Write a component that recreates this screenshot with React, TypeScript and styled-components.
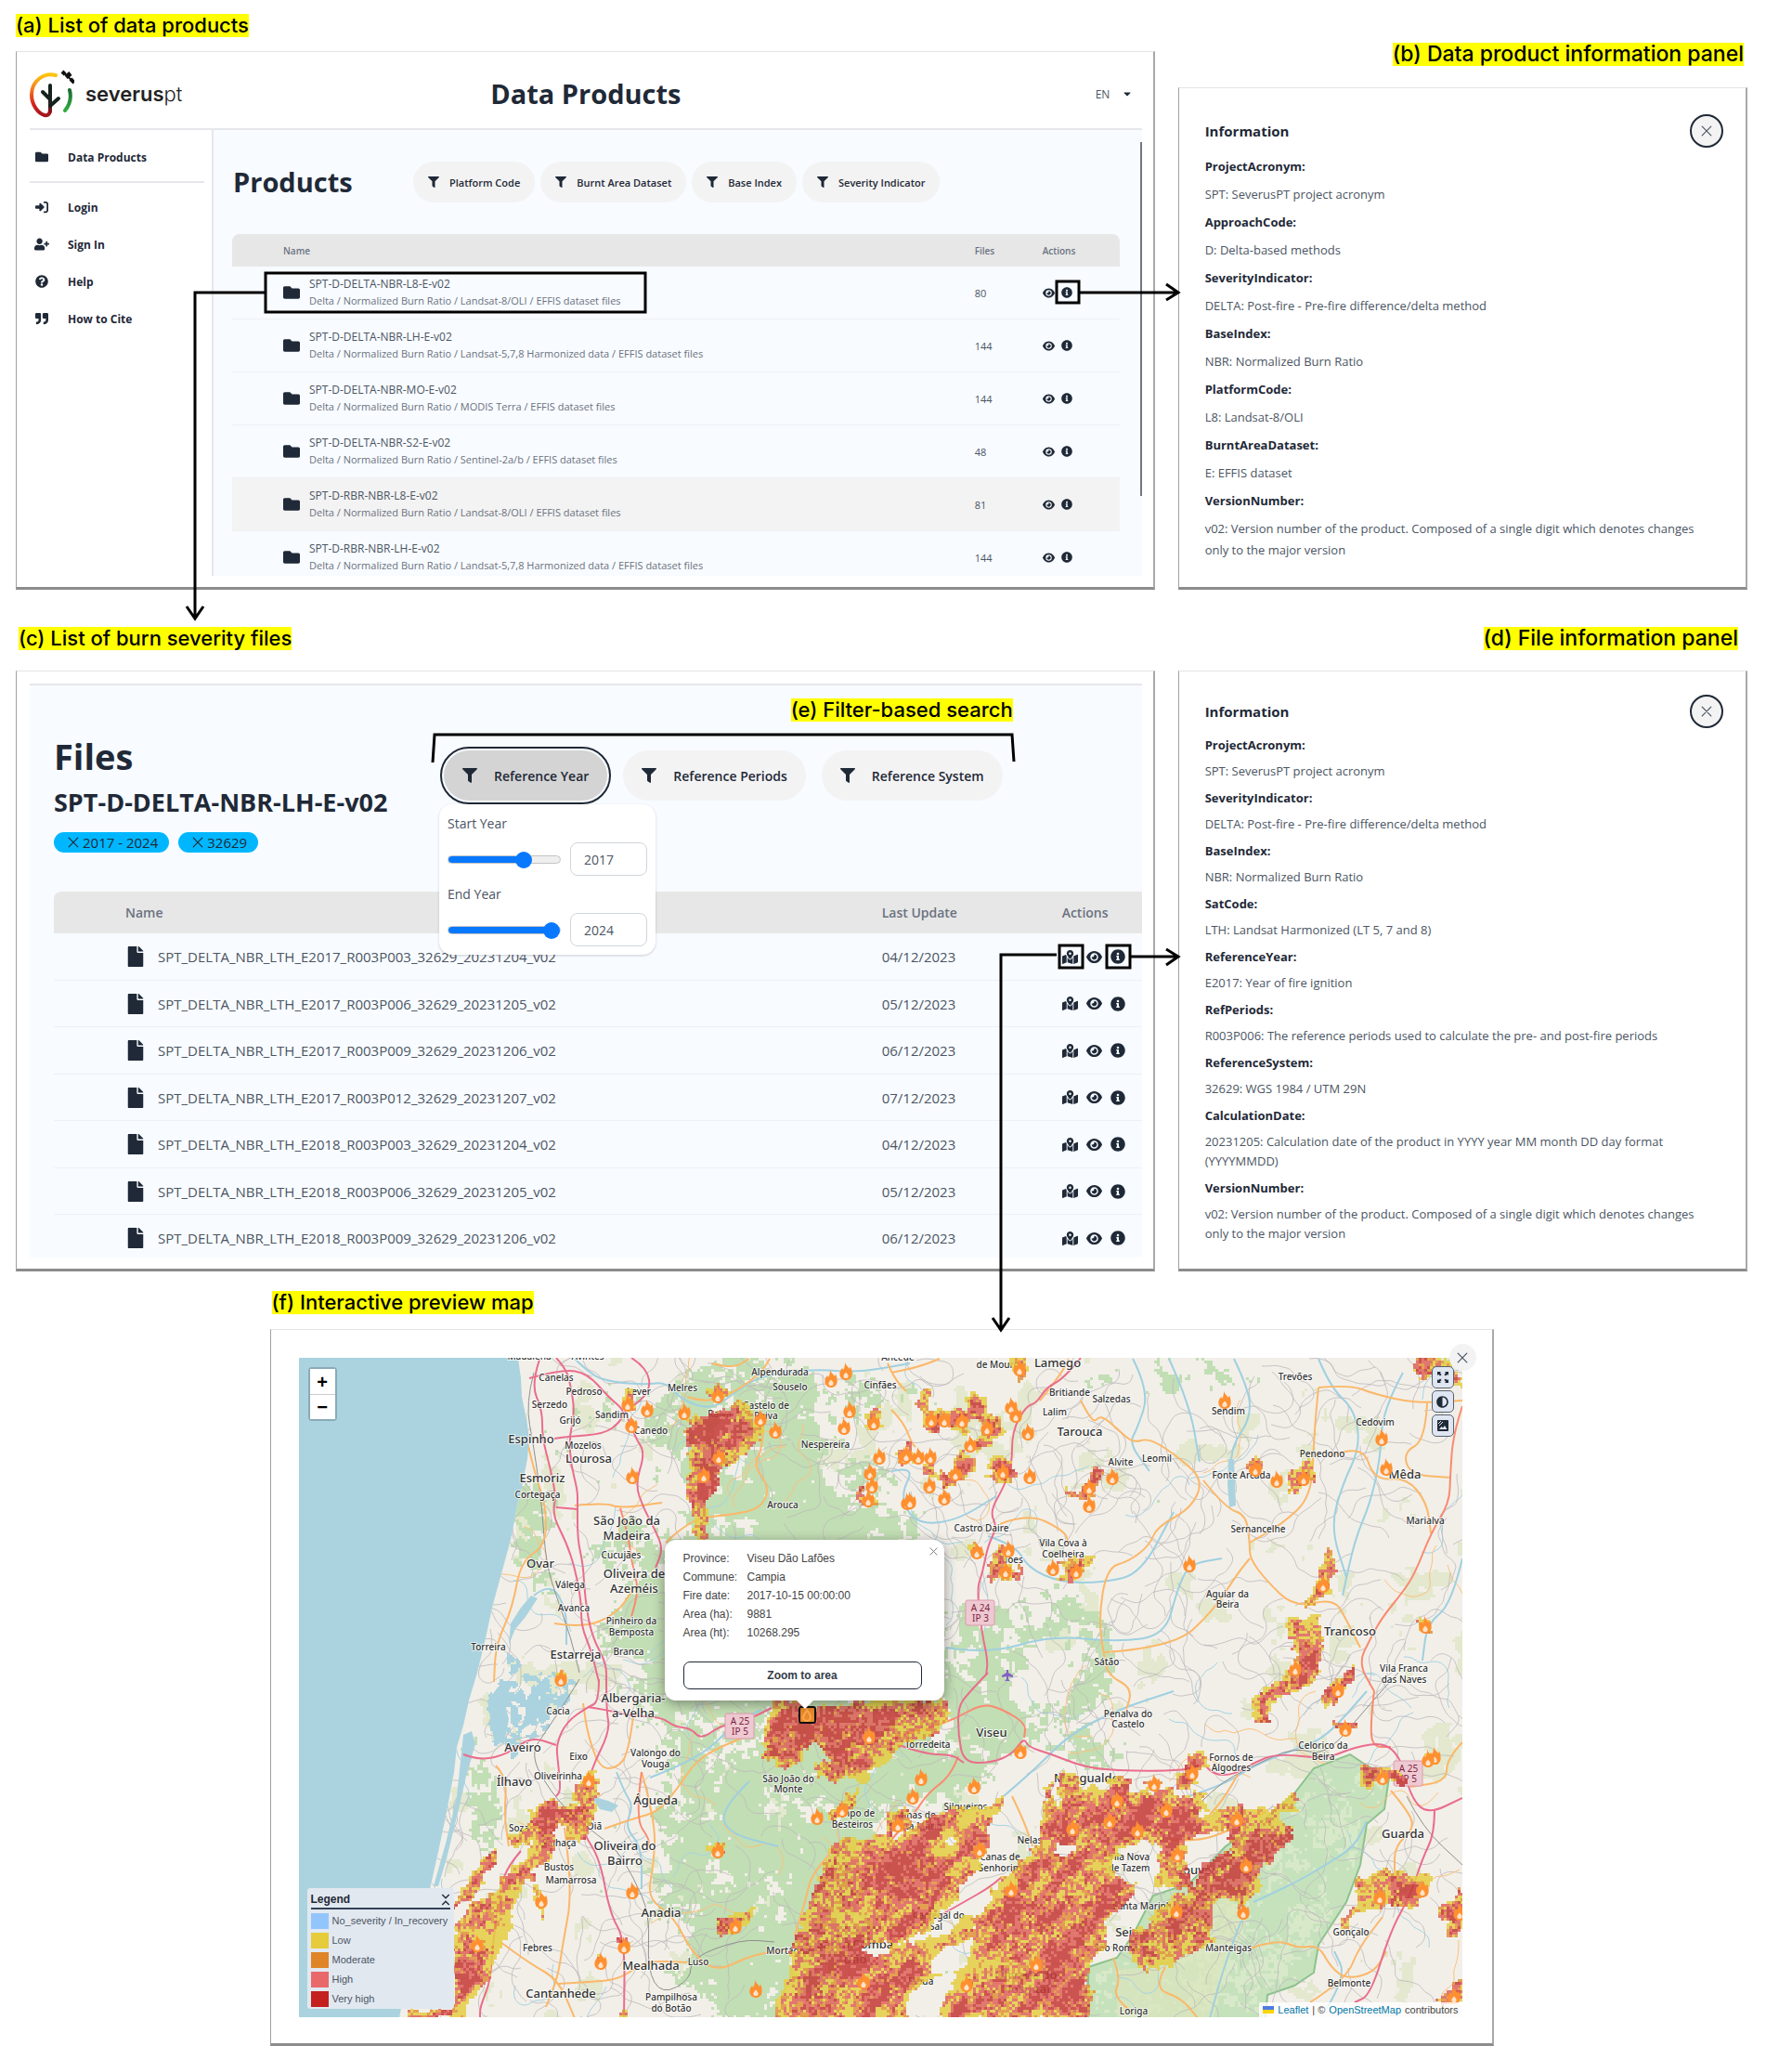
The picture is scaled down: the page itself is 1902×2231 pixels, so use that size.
import React, { useState } from "react";
import styled, { createGlobalStyle, css } from "styled-components";
import {
  FaFolder,
  FaFile,
  FaFilter,
  FaUserPlus,
  FaQuestionCircle,
  FaQuoteRight,
  FaInfoCircle,
  FaCaretDown,
  FaMapMarkedAlt,
  FaAdjust,
} from "react-icons/fa";
import { FaRightToBracket, FaEye } from "react-icons/fa6";

const ink = "#1f2937";
const slate = "#4b5563";
const line = "#e5e7eb";
const tint = "#f8fbff";

const Global = createGlobalStyle`
  *, *::before, *::after { box-sizing: border-box; }
  body { margin: 0; background: #fff; color: ${ink}; font-family: "Open Sans", "Noto Sans", sans-serif; }
  h1, h2, h3, p, ul, dl, dd, figure { margin: 0; padding: 0; }
  button, input, select { font: inherit; color: inherit; }
  button { cursor: pointer; }
`;

/* ---------- page frame ---------- */

const Page = styled.main`
  position: relative;
  padding: 15px 20px 28px 17px;
`;

const Pair = styled.div<{ $after: number }>`
  display: grid;
  grid-template-columns: 2fr 1fr;
  column-gap: 25px;
  margin-bottom: ${(p) => p.$after}px;
`;

const Column = styled.section<{ $drop?: boolean }>`
  position: relative;
  min-width: 0;
  display: flex;
  flex-direction: column;
  align-items: flex-start;
  padding-top: ${(p) => (p.$drop ? 31 : 0)}px;
`;

const Caption = styled.h2<{ $after: number; $indent?: number; $right?: number }>`
  background: #ff0;
  color: #000;
  font: 500 22px/25px Inter, "Open Sans", sans-serif;
  margin-bottom: ${(p) => p.$after}px;
  margin-left: ${(p) => p.$indent ?? 0}px;
  ${(p) =>
    p.$right !== undefined
      ? css`
          align-self: flex-end;
          margin-right: ${p.$right}px;
          font-size: 23px;
        `
      : ""}
`;

const FloatingCaption = styled(Caption)`
  position: absolute;
  top: 77px;
  right: 153px;
  z-index: 2;
`;

const Panel = styled.div`
  width: 100%;
  flex: 1;
  background: #fff;
  border-style: solid;
  border-width: 1px 2px 3px 1px;
  border-color: #e4e4e4 #a9a9a9 #8c8c8c #a0a0a0;
`;

/* ---------- product list ---------- */

const AppShell = styled(Panel)`
  padding: 0 12px 12px 14px;
`;

const Header = styled.header`
  display: grid;
  grid-template-columns: 1fr auto 1fr;
  align-items: center;
  height: 84px;
  padding-top: 8px;
  border-bottom: 2px solid ${line};
`;

const Brand = styled.a`
  display: flex;
  align-items: center;
  gap: 12px;
  color: #222;
  text-decoration: none;
  font: 600 22px/24px Inter, sans-serif;
  span {
    font-weight: 300;
  }
`;

const PageTitle = styled.h1`
  font-size: 29px;
  line-height: 40px;
  font-weight: 700;
`;

const Language = styled.label`
  justify-self: end;
  display: flex;
  align-items: center;
  gap: 12px;
  padding-right: 10px;
  font-size: 12px;
  select {
    appearance: none;
    border: 0;
    padding: 0;
    background: none;
    color: ${slate};
  }
`;

const ShellBody = styled.div`
  display: flex;
  height: 480px;
  overflow: hidden;
`;

const Sidebar = styled.nav`
  flex: 0 0 198px;
  padding: 9px 8px 0 0;
  border-right: 2px solid ${line};
`;

const NavList = styled.ul`
  list-style: none;
  & + & {
    margin-top: 6px;
    padding-top: 6px;
    border-top: 2px solid ${line};
  }
`;

const NavLink = styled.a`
  display: grid;
  grid-template-columns: 36px 1fr;
  align-items: center;
  height: 40px;
  padding-left: 5px;
  color: ${ink};
  font-size: 12px;
  font-weight: 700;
  text-decoration: none;
  svg {
    width: 16px;
    height: 14px;
    justify-self: start;
  }
`;

const ProductArea = styled.div`
  position: relative;
  flex: 1;
  min-width: 0;
  padding: 34px 24px 0 20px;
  background: ${tint};
`;

const ScrollThumb = styled.span`
  position: absolute;
  top: 13px;
  right: 0;
  width: 2px;
  height: 381px;
  background: #71777d;
`;

const Toolbar = styled.div`
  display: flex;
  align-items: center;
  margin-bottom: 34px;
`;

const ProductHeading = styled.h2`
  flex: 0 0 195px;
  padding-left: 1px;
  font-size: 29px;
  line-height: 44px;
`;

const FilterRow = styled.div<{ $gap: number }>`
  display: flex;
  gap: ${(p) => p.$gap}px;
`;

const FilterButton = styled.button<{ $large?: boolean; $open?: boolean }>`
  display: flex;
  align-items: center;
  white-space: nowrap;
  border: 0;
  border-radius: 28px;
  font-weight: 600;
  height: ${(p) => (p.$large ? 54 : 44)}px;
  gap: ${(p) => (p.$large ? 18 : 11)}px;
  padding: 0 ${(p) => (p.$large ? 20 : 16)}px;
  font-size: ${(p) => (p.$large ? 14 : 11)}px;
  background: ${(p) => (p.$open ? "#d4d4d4" : "#f3f3f3")};
  outline: ${(p) => (p.$open ? `2px solid ${ink}` : "none")};
  outline-offset: 2px;
  svg {
    width: ${(p) => (p.$large ? 16 : 12)}px;
    height: ${(p) => (p.$large ? 16 : 12)}px;
  }
`;

const Table = styled.table<{ $large?: boolean }>`
  width: 100%;
  table-layout: fixed;
  border-collapse: separate;
  border-spacing: 0;
  font-size: ${(p) => (p.$large ? 15 : 12)}px;
  color: ${slate};
  th {
    height: ${(p) => (p.$large ? 45 : 35)}px;
    padding: 0;
    text-align: left;
    font-size: ${(p) => (p.$large ? 14 : 10)}px;
    font-weight: 600;
    color: #6b7280;
    background: #e7e7e7;
  }
  th:first-child {
    border-top-left-radius: 8px;
  }
  th:last-child {
    border-top-right-radius: ${(p) => (p.$large ? 0 : 8)}px;
  }
  td {
    padding: 0;
    height: ${(p) => (p.$large ? 51 : 57)}px;
    border-bottom: 1px solid #eef1f4;
  }
  tr:nth-child(even) td {
    height: ${(p) => (p.$large ? 50 : 57)}px;
  }
  td:first-child,
  th:first-child {
    padding-left: ${(p) => (p.$large ? 77 : 55)}px;
  }
`;

const Col = styled.col<{ $w?: number }>`
  width: ${(p) => (p.$w ? p.$w + "px" : "auto")};
`;

const Row = styled.tr<{ $hover?: boolean }>`
  background: ${(p) => (p.$hover ? "#f3f3f3" : "transparent")};
`;

const NameCell = styled.div<{ $gap: number }>`
  display: flex;
  align-items: center;
  gap: ${(p) => p.$gap}px;
  white-space: nowrap;
  line-height: 18px;
  svg {
    color: ${ink};
    flex: none;
  }
  small {
    display: block;
    font-size: 11px;
    color: #6b7280;
  }
`;

const Count = styled.td`
  font-size: 11px;
`;

const Actions = styled.div<{ $gap: number }>`
  display: flex;
  align-items: center;
  gap: ${(p) => p.$gap}px;
`;

const IconButton = styled.button`
  display: flex;
  padding: 0;
  border: 0;
  background: none;
  color: ${ink};
`;

/* ---------- information panels ---------- */

const InfoPanel = styled(Panel)<{ $top: number }>`
  padding: ${(p) => p.$top}px 24px 12px 28px;
`;

const InfoHead = styled.div<{ $after: number }>`
  display: flex;
  justify-content: space-between;
  align-items: center;
  margin-bottom: ${(p) => p.$after}px;
  h3 {
    font-size: 15px;
    line-height: 24px;
    font-weight: 700;
  }
`;

const RoundClose = styled.button`
  display: grid;
  place-items: center;
  width: 36px;
  height: 36px;
  padding: 0;
  border: 2px solid ${ink};
  border-radius: 50%;
  background: #f3f3f3;
  color: ${slate};
`;

const Facts = styled.dl<{ $line: number; $gap: number }>`
  padding-right: 12px;
  font-size: 13px;
  line-height: ${(p) => p.$line}px;
  dt {
    font-weight: 700;
    margin-bottom: 7px;
  }
  dd {
    color: ${slate};
    margin-bottom: ${(p) => p.$gap}px;
  }
`;

/* ---------- file list ---------- */

const FilePanel = styled(Panel)`
  padding: 13px 12px 12px 14px;
`;

const FileArea = styled.div`
  height: 618px;
  overflow: hidden;
  border-top: 2px solid ${line};
  background: ${tint};
  padding: 52px 0 0 26px;
`;

const FileToolbar = styled.div`
  display: flex;
  align-items: flex-start;
  margin-bottom: 42px;
`;

const FileTitles = styled.div`
  flex: 0 0 420px;
  h2 {
    font-size: 38px;
    line-height: 48px;
  }
  h3 {
    margin: 9px 0 15px;
    font-size: 27px;
    line-height: 34px;
    font-weight: 700;
  }
`;

const Chips = styled.div`
  display: flex;
  gap: 10px;
`;

const Chip = styled.button`
  display: flex;
  align-items: center;
  gap: 4px;
  height: 22px;
  padding: 0 12px 0 15px;
  border: 0;
  border-radius: 11px;
  background: #00b7ff;
  font-size: 15px;
`;

const FileFilters = styled(FilterRow)`
  padding-top: 18px;
`;

const Anchor = styled.div`
  position: relative;
`;

const YearMenu = styled.div`
  position: absolute;
  top: 58px;
  left: -5px;
  z-index: 1;
  width: 233px;
  padding: 11px 9px 9px;
  border-radius: 14px;
  background: #fff;
  box-shadow: 0 1px 3px rgba(0, 0, 0, 0.18);
  font-size: 14px;
  color: ${slate};
`;

const YearField = styled.div`
  & + & {
    margin-top: 10px;
  }
  label {
    display: block;
    line-height: 20px;
    margin-bottom: 10px;
  }
  div {
    display: flex;
    align-items: center;
    gap: 10px;
  }
`;

const Slider = styled.input<{ $fill: number }>`
  appearance: none;
  width: 122px;
  height: 18px;
  margin: 0;
  background: none;
  &::-webkit-slider-runnable-track {
    height: 9px;
    border: 1px solid #c4c4c4;
    border-radius: 5px;
    background: linear-gradient(to right, #0878ff ${(p) => p.$fill}%, #efefef ${(p) => p.$fill}%);
    background-origin: border-box;
  }
  &::-webkit-slider-thumb {
    appearance: none;
    width: 18px;
    height: 18px;
    margin-top: -5px;
    border-radius: 50%;
    background: #0878ff;
  }
`;

const YearBox = styled.input`
  width: 83px;
  height: 36px;
  padding: 0 14px;
  border: 1px solid #d1d5db;
  border-radius: 8px;
  background: #fff;
  font-size: 14px;
`;

/* ---------- map preview ---------- */

const MapSection = styled.section`
  width: 71%;
  max-width: 1318px;
  margin: 0 auto;
  display: flex;
  flex-direction: column;
  align-items: flex-start;
`;

const MapPanel = styled(Panel)`
  padding: 30px 32px 28px 30px;
`;

const MapFrame = styled.div`
  position: relative;
  font: 12px/19px "Liberation Sans", Arial, sans-serif;
  color: #444;
  > svg {
    display: block;
    width: 100%;
    height: auto;
  }
`;

const ZoomControl = styled.div`
  position: absolute;
  top: 10px;
  left: 10px;
  width: 31px;
  border: 2px solid rgba(90, 110, 120, 0.4);
  border-radius: 4px;
  button {
    display: block;
    width: 27px;
    height: 27px;
    padding: 0;
    border: 0;
    background: #fff;
    color: #000;
    font-weight: 700;
    font-size: 20px;
    line-height: 26px;
  }
  button + button {
    border-top: 1px solid #ccc;
  }
`;

const MapTools = styled.div`
  position: absolute;
  top: 9px;
  right: 9px;
  display: grid;
  gap: 2px;
  button {
    display: grid;
    place-items: center;
    width: 24px;
    height: 24px;
    padding: 0;
    border: 1px solid #59616d;
    border-radius: 5px;
    background: #dfe6f1;
    color: ${ink};
  }
`;

const MapClose = styled.button`
  position: absolute;
  top: -15px;
  right: -15px;
  display: grid;
  place-items: center;
  width: 29px;
  height: 29px;
  padding: 0;
  border: 0;
  border-radius: 50%;
  background: #f3f3f3;
  color: ${slate};
`;

const Popup = styled.div`
  position: absolute;
  top: 196px;
  left: 394px;
  width: 301px;
  height: 173px;
  padding: 10px 24px 0 20px;
  border-radius: 12px;
  background: #fff;
  box-shadow: 0 3px 14px rgba(0, 0, 0, 0.4);
  &::after {
    content: "";
    position: absolute;
    left: 142px;
    bottom: -9px;
    border: 9px solid transparent;
    border-bottom: 0;
    border-top-color: #fff;
  }
  dl {
    display: grid;
    grid-template-columns: 69px 1fr;
    line-height: 20px;
    font-size: 12px;
    height: 121px;
    align-content: start;
  }
`;

const PopupClose = styled.button`
  position: absolute;
  top: 6px;
  right: 5px;
  display: flex;
  padding: 2px;
  border: 0;
  background: none;
  color: #757575;
`;

const AreaButton = styled.button`
  width: 100%;
  height: 30px;
  border: 1px solid ${ink};
  border-radius: 7px;
  background: #fff;
  color: #333c48;
  font-weight: 700;
`;

const Legend = styled.div`
  position: absolute;
  left: 9px;
  bottom: 9px;
  width: 158px;
  height: 130px;
  padding: 3px 4px;
  border-radius: 3px;
  background: #e2e8f0;
  color: ${slate};
  white-space: nowrap;
  ul {
    display: grid;
    row-gap: 1px;
    padding-top: 2px;
    list-style: none;
  }
  li {
    display: flex;
    align-items: center;
    gap: 4px;
    height: 20px;
    font-size: 11px;
  }
`;

const LegendHead = styled.button`
  display: flex;
  justify-content: space-between;
  align-items: center;
  width: 100%;
  height: 20px;
  padding: 0;
  border: 0;
  border-bottom: 2px solid #334155;
  background: none;
  font-weight: 700;
  color: ${ink};
`;

const Swatch = styled.i<{ $c: string }>`
  width: 19px;
  height: 17px;
  background: ${(p) => p.$c};
`;

const Attribution = styled.div`
  position: absolute;
  right: 0;
  bottom: 0;
  display: flex;
  align-items: center;
  gap: 4px;
  padding: 0 4px;
  line-height: 16px;
  font-size: 11px;
  background: rgba(255, 255, 255, 0.8);
  a {
    color: #0078a8;
    text-decoration: none;
  }
`;

const Callouts = styled.svg`
  position: absolute;
  inset: 0;
  width: 100%;
  height: 100%;
  pointer-events: none;
  z-index: 3;
`;

/* ---------- map geometry ---------- */

const W = 1253;
const H = 710;

type Pt = [number, number];
type Sheet = (flat: number[]) => Pt[];

/* Map features are digitised on four overlapping sheets, each with its own origin. */
const sheet =
  (ox: number, oy: number, sx: number): Sheet =>
  (flat) => {
    const out: Pt[] = [];
    for (let i = 0; i < flat.length; i += 2) {
      out.push([Math.round(flat[i] / sx + ox), Math.round(flat[i + 1] / 3 + oy)]);
    }
    return out;
  };

const NW = sheet(-42, -91, 2.24);
const NE = sheet(638, -51, 2.306);
const SW = sheet(-42, 339, 2.24);
const SE = sheet(638, 339, 2.306);

const hash = (x: number, y: number) => {
  let h = (x * 374761393 + y * 668265263) | 0;
  h = Math.imul(h ^ (h >>> 13), 1274126177);
  return ((h ^ (h >>> 16)) >>> 0) / 4294967296;
};

const noise = (x: number, y: number) => {
  const xi = Math.floor(x);
  const yi = Math.floor(y);
  const fx = x - xi;
  const fy = y - yi;
  const u = fx * fx * (3 - 2 * fx);
  const v = fy * fy * (3 - 2 * fy);
  const a = hash(xi, yi) * (1 - u) + hash(xi + 1, yi) * u;
  const b = hash(xi, yi + 1) * (1 - u) + hash(xi + 1, yi + 1) * u;
  return a * (1 - v) + b * v;
};

const inside = (poly: Pt[], x: number, y: number) => {
  let hit = false;
  for (let i = 0, j = poly.length - 1; i < poly.length; j = i++) {
    const [xi, yi] = poly[i];
    const [xj, yj] = poly[j];
    if (yi > y !== yj > y && x < ((xj - xi) * (y - yi)) / (yj - yi) + xi) hit = !hit;
  }
  return hit;
};

const edgeDistance = (poly: Pt[], x: number, y: number) => {
  let best = 1e9;
  for (let i = 0, j = poly.length - 1; i < poly.length; j = i++) {
    const [ax, ay] = poly[j];
    const [bx, by] = poly[i];
    const dx = bx - ax;
    const dy = by - ay;
    const t = Math.max(0, Math.min(1, ((x - ax) * dx + (y - ay) * dy) / (dx * dx + dy * dy || 1)));
    best = Math.min(best, Math.hypot(x - ax - t * dx, y - ay - t * dy));
  }
  return best;
};

const trace = (pts: Pt[], close = false) =>
  "M" + pts.map((p) => p.join(" ")).join("L") + (close ? "Z" : "");

const curve = (pts: Pt[]) => {
  let d = `M${pts[0][0]} ${pts[0][1]}`;
  for (let i = 1; i < pts.length - 1; i++) {
    const mx = (pts[i][0] + pts[i + 1][0]) / 2;
    const my = (pts[i][1] + pts[i + 1][1]) / 2;
    d += `Q${pts[i][0]} ${pts[i][1]} ${mx} ${my}`;
  }
  const last = pts[pts.length - 1];
  return d + `L${last[0]} ${last[1]}`;
};

const coast: Pt[] = [
  ...NW([622, 273, 630, 340, 632, 400, 642, 470, 650, 530, 645, 600, 632, 690, 620, 750, 605, 860, 580, 980, 560, 1080, 545, 1180, 525, 1290]),
  ...SW([505, 90, 490, 170, 475, 240, 468, 320, 450, 450, 430, 580, 410, 700, 380, 860, 350, 1020, 335, 1115]),
];
const sea: Pt[] = [[0, 0], ...coast, [0, H]];

const marshes: Pt[][] = [
  SW([545, 80, 570, 30, 600, -20, 660, 10, 700, 0, 740, 20, 745, 90, 700, 130, 700, 170, 650, 220, 610, 280, 575, 260, 550, 200]),
  NW([595, 1225, 625, 1250, 640, 1300, 690, 1280, 740, 1290, 770, 1330, 585, 1330]),
];

const lagoons: Pt[][] = [
  SW([548, 90, 575, 45, 612, 30, 590, 90, 600, 150, 590, 230, 565, 220]),
  SW([640, 100, 690, 80, 690, 120, 660, 160, 625, 190, 640, 140]),
  NW([605, 1130, 630, 1080, 655, 1040, 670, 1050, 640, 1110, 615, 1150, 600, 1200]),
  SW([490, 200, 510, 190, 520, 230, 500, 320, 480, 440, 450, 600, 430, 690, 420, 690, 450, 540, 475, 400]),
  SW([800, 400, 840, 415, 865, 430, 850, 450, 820, 440]),
  NE([838, 480, 850, 480, 855, 630, 840, 635, 835, 560]),
];

const buildMarsh = () => {
  let d = "";
  for (const poly of marshes) {
    for (let y = 300; y < 450; y += 2) {
      for (let x = 190; x < 310; x += 2) {
        if (inside(poly, x, y) && noise(x / 7, y / 7) * 0.7 + noise(x / 3, y / 3) * 0.3 > 0.48) d += `M${x} ${y}h2v2h-2z`;
      }
    }
  }
  return d;
};

/* Forest cover: centre, radii and density of each wooded block. */
const woods: number[][] = [
  [505, 180, 100, 140, 0.9], [450, 60, 80, 70, 0.8], [560, 60, 90, 60, 0.35], [420, 330, 60, 110, 0.85],
  [470, 440, 90, 150, 1], [560, 520, 90, 200, 1], [470, 620, 80, 120, 0.9], [600, 260, 80, 90, 0.6],
  [745, 400, 90, 60, 0.9], [720, 330, 60, 70, 0.9], [860, 330, 40, 70, 0.8], [800, 270, 60, 40, 0.75],
  [330, 70, 80, 60, 0.45], [320, 230, 60, 100, 0.4], [250, 200, 26, 70, 0.75], [195, 480, 30, 90, 0.8],
  [340, 560, 80, 60, 0.35], [640, 160, 90, 80, 0.35], [880, 20, 90, 30, 0.6], [1020, 20, 80, 30, 0.5],
  [920, 180, 60, 60, 0.3], [640, 400, 60, 60, 0.7], [380, 250, 50, 90, 0.6], [660, 30, 80, 40, 0.3],
  [870, 440, 60, 40, 0.5], [230, 150, 30, 60, 0.5], [680, 450, 60, 50, 0.55], [720, 660, 50, 40, 0.4],
];

const buildWoods = () => {
  let dark = "";
  let pale = "";
  for (let y = 0; y < H; y += 3) {
    for (let x = 0; x < W; x += 3) {
      let d = 0;
      for (const [cx, cy, rx, ry, k] of woods) {
        const q = ((x - cx) / rx) ** 2 + ((y - cy) / ry) ** 2;
        if (q < 2.6) d += k * Math.exp(-q * 1.1);
      }
      const n = noise(x / 30, y / 30) * 0.35 + noise(x / 11 + 40, y / 11) * 0.35 + noise(x / 4, y / 4 + 70) * 0.3;
      if (n < Math.min(d, 0.92) * 0.72) dark += `M${x} ${y}h3v3h-3z`;
      else if (noise(x / 34 + 90, y / 34) * 0.75 + noise(x / 8, y / 8) * 0.25 > 0.74) pale += `M${x} ${y}h3v3h-3z`;
    }
  }
  return { dark, pale };
};

const estrela = SE([1140, 265, 1180, 300, 1235, 340, 1225, 440, 1180, 490, 1165, 620, 1130, 740, 1060, 880, 1050, 970, 1000, 1010, 935, 1040, 930, 1115, 490, 1115, 490, 950, 560, 920, 600, 850, 650, 720, 740, 680, 830, 560, 930, 470, 1000, 390, 1050, 310]);
const meadow = SE([560, 960, 640, 950, 760, 880, 800, 740, 840, 720, 880, 800, 830, 960, 800, 1115, 560, 1115]);

const buildClearings = () => {
  let d = "";
  for (let y = 420; y < H; y += 3) {
    for (let x = 840; x < 1180; x += 3) {
      if (!inside(estrela, x, y) || edgeDistance(estrela, x, y) < 8) continue;
      if (noise(x / 22, y / 30) * 0.5 + noise(x / 4, y / 4) * 0.5 > 0.6) d += `M${x} ${y}h3v3h-3z`;
    }
  }
  return d;
};

const burns: Pt[][] = [
  NW([1040, 450, 1100, 455, 1130, 430, 1160, 405, 1180, 440, 1190, 470, 1215, 480, 1205, 540, 1160, 590, 1120, 620, 1100, 690, 1070, 740, 1080, 800, 1078, 870, 1050, 870, 1042, 800, 1035, 740, 1032, 660, 1035, 560, 1025, 510]),
  NW([1072, 375, 1095, 358, 1132, 380, 1120, 412, 1080, 402]),
  NW([1458, 450, 1495, 430, 1498, 500, 1465, 510]),
  NW([1434, 690, 1455, 688, 1465, 720, 1494, 728, 1492, 754, 1450, 742]),
  NW([1540, 575, 1568, 560, 1578, 600, 1540, 608]),
  NW([878, 375, 902, 375, 905, 440, 880, 440]),
  NW([708, 1290, 740, 1290, 735, 1312, 712, 1310]),
  NE([292, 155, 338, 155, 335, 190, 318, 225, 300, 200]),
  NE([60, 300, 80, 250, 100, 262, 95, 315, 140, 325, 180, 315, 195, 262, 235, 278, 240, 340, 278, 345, 280, 390, 240, 435, 210, 460, 196, 430, 220, 400, 225, 352, 200, 350, 180, 395, 150, 388, 125, 372, 110, 392, 90, 382, 80, 340]),
  NE([15, 440, 45, 430, 50, 485, 20, 490]),
  NE([160, 460, 185, 440, 207, 510, 180, 545, 150, 565, 135, 582, 118, 545, 88, 530, 78, 490, 100, 495, 115, 528, 150, 515]),
  NE([232, 510, 270, 465, 292, 480, 312, 520, 290, 560, 250, 548]),
  NE([500, 508, 538, 520, 515, 560, 505, 604, 470, 612, 425, 592, 423, 563, 460, 583, 485, 558]),
  NE([878, 500, 900, 465, 915, 490, 912, 530, 890, 520]),
  NE([985, 515, 1045, 476, 1054, 530, 1020, 574, 988, 594]),
  NE([1300, 150, 1385, 150, 1400, 200, 1420, 205, 1420, 255, 1398, 245, 1380, 212, 1340, 205, 1308, 235]),
  NE([190, 755, 215, 755, 225, 800, 200, 785]),
  NE([250, 790, 270, 760, 300, 765, 288, 800, 300, 838, 327, 825, 322, 862, 290, 877, 260, 862, 243, 882]),
  NE([403, 800, 440, 810, 497, 795, 492, 828, 465, 852, 455, 882, 413, 880, 428, 842]),
  NE([1083, 765, 1102, 800, 1093, 870, 1087, 915, 1050, 952, 1028, 957, 1043, 900, 1062, 840]),
  NE([985, 990, 1020, 992, 1064, 970, 1062, 1050, 1077, 1090, 1052, 1190, 1030, 1214, 1000, 1230, 960, 1252, 942, 1280, 932, 1335, 898, 1340, 893, 1300, 903, 1240, 950, 1200, 998, 1150, 1003, 1100, 985, 1060]),
  NE([1103, 1190, 1150, 1150, 1137, 1200, 1112, 1242, 1102, 1278, 1068, 1282, 1066, 1240, 1083, 1210]),
  NE([1308, 995, 1335, 990, 1342, 1037, 1310, 1032]),
  SE([1095, 160, 1155, 155, 1150, 170, 1130, 190, 1100, 180]),
  SE([710, 330, 740, 300, 734, 256, 780, 255, 780, 295, 760, 330, 735, 377, 708, 372]),
  SE([1163, 298, 1200, 298, 1237, 305, 1282, 330, 1277, 367, 1250, 352, 1220, 322, 1205, 352, 1168, 372]),
  SE([1318, 253, 1362, 258, 1352, 292, 1323, 302]),
  SE([1158, 668, 1190, 653, 1225, 633, 1252, 630, 1290, 658, 1342, 638, 1342, 682, 1322, 692, 1302, 767, 1250, 742, 1190, 768, 1140, 788, 1132, 818, 1116, 802, 1128, 770, 1150, 755, 1150, 700]),
  SE([1350, 755, 1385, 740, 1410, 698, 1424, 720, 1424, 800, 1402, 865, 1383, 842, 1383, 810]),
  SE([1355, 1055, 1400, 1000, 1424, 983, 1424, 1060, 1380, 1068]),
  SE([615, 350, 670, 345, 660, 370, 640, 368]),
  SW([1240, 88, 1300, 88, 1330, 118, 1380, 112, 1430, 88, 1655, 88, 1665, 130, 1625, 205, 1560, 222, 1503, 292, 1472, 327, 1457, 370, 1430, 334, 1385, 360, 1337, 322, 1337, 290, 1378, 280, 1353, 250, 1348, 222, 1312, 242, 1303, 282, 1265, 310, 1217, 272, 1211, 200, 1226, 150]),
  SW([1403, 370, 1442, 383, 1428, 432, 1410, 463, 1375, 478, 1373, 455, 1400, 430, 1420, 395]),
  SW([1518, 455, 1560, 430, 1568, 500, 1540, 512, 1503, 542]),
  SE([-62, 535, -20, 525, 20, 530, 80, 470, 110, 465, 150, 430, 235, 435, 270, 400, 280, 425, 242, 470, 242, 540, 227, 590, 215, 640, 180, 680, 160, 740, 120, 780, 90, 830, 40, 860, 10, 880, 100, 855, 150, 830, 170, 790, 217, 778, 207, 842, 150, 882, 110, 905, 90, 960, 122, 980, 80, 990, 45, 1030, 40, 1120, -300, 1120, -278, 1040, -257, 970, -239, 870, -218, 780, -187, 680, -167, 620, -152, 555, -100, 530]),
  SE([378, 370, 405, 352, 402, 410, 420, 420, 413, 328, 460, 318, 470, 380, 510, 370, 560, 333, 602, 338, 590, 385, 640, 380, 700, 368, 707, 400, 740, 400, 745, 378, 777, 388, 782, 440, 750, 460, 800, 460, 860, 418, 880, 440, 932, 423, 925, 450, 1002, 383, 1002, 442, 960, 460, 970, 500, 1002, 498, 997, 542, 962, 572, 947, 614, 917, 624, 917, 692, 892, 715, 870, 766, 830, 722, 802, 742, 794, 800, 794, 872, 742, 904, 692, 944, 632, 960, 595, 932, 598, 828, 638, 818, 638, 778, 690, 748, 698, 710, 740, 710, 730, 692, 648, 692, 663, 620, 660, 542, 620, 547, 560, 577, 552, 650, 602, 678, 604, 712, 562, 762, 532, 792, 532, 882, 497, 932, 492, 960, 477, 1000, 512, 1030, 492, 1062, 487, 1120, 126, 1120, 132, 1060, 162, 970, 187, 940, 207, 800, 267, 680, 328, 600, 363, 560, 373, 480]),
  SW([753, 370, 790, 318, 817, 338, 814, 380, 802, 420, 802, 480, 772, 542, 738, 537, 743, 500, 715, 482, 707, 560, 702, 602, 662, 632, 627, 690, 603, 790, 603, 830, 573, 902, 558, 952, 542, 1012, 503, 1062, 492, 1120, 346, 1120, 352, 1090, 466, 1088, 466, 810, 518, 740, 577, 700, 577, 660, 648, 590, 657, 540, 618, 572, 598, 530, 638, 500, 657, 440, 710, 398, 722, 430, 765, 420]),
  SW([558, 563, 577, 605, 547, 652, 532, 692, 492, 742, 466, 758, 488, 690, 518, 640]),
  SW([652, 640, 672, 690, 692, 800, 675, 790, 658, 710]),
  SW([1098, 800, 1150, 778, 1192, 763, 1187, 802, 1108, 853]),
  SW([1080, 560, 1110, 543, 1125, 575, 1090, 582]),
  SW([872, 1090, 893, 1090, 893, 1120, 872, 1120]),
  SW([862, 853, 886, 858, 892, 895, 868, 885]),
  SW([810, 900, 825, 900, 820, 930, 812, 925]),
];

const unburnt: Pt[][] = [
  SE([730, 535, 840, 510, 840, 570, 775, 605, 752, 690, 728, 600]),
  SE([400, 570, 440, 548, 465, 572, 420, 592]),
  SE([500, 345, 545, 335, 540, 370, 505, 375]),
  SE([130, 545, 165, 530, 150, 555]),
  SW([1450, 880, 1510, 870, 1520, 900, 1480, 915]),
];

const severity = ["#e6cf45", "#e2943a", "#e0645c", "#c63b38"];

const buildBurns = () => {
  const d = ["", "", "", ""];
  const cell = 3;
  burns.forEach((poly, id) => {
    const xs = poly.map((p) => p[0]);
    const ys = poly.map((p) => p[1]);
    const x0 = Math.max(0, Math.floor(Math.min(...xs) / cell) * cell - 6);
    const y0 = Math.max(0, Math.floor(Math.min(...ys) / cell) * cell - 6);
    const x1 = Math.min(W, Math.max(...xs) + 6);
    const y1 = Math.min(H, Math.max(...ys) + 6);
    const small = (x1 - x0) * (y1 - y0) < 4500;
    const bias = id === 0 ? 0.08 : small ? 0.02 : 0;
    for (let y = y0; y < y1; y += cell) {
      for (let x = x0; x < x1; x += cell) {
        const wx = x + 1 + (noise(x / 6, y / 6 + id * 7) - 0.5) * 8;
        const wy = y + 1 + (noise(x / 6 + 31, y / 6) - 0.5) * 8;
        if (!inside(poly, wx, wy) || unburnt.some((u) => inside(u, wx, wy))) continue;
        const rim = Math.min(1, edgeDistance(poly, wx, wy) / (small ? 6 : 11));
        /* Severity streaks run south-west to north-east, along the wind. */
        const u = (x - y) / 1.4;
        const v = (x + y) / 1.4;
        const n =
          noise(v / 12 + 11, u / 40) * 0.3 + noise(x / 26 + 5, y / 26) * 0.18 + noise(x / 7, y / 7) * 0.24 + hash(x + id, y) * 0.28;
        const s = n * 1.25 + rim * 0.2 - 0.23 + bias;
        const k = s < 0.44 ? 0 : s < 0.53 ? 1 : s < 0.67 ? 2 : 3;
        d[k] += `M${x} ${y}h3v3h-3z`;
      }
    }
  });
  return d;
};

/* Short winding lines for lanes and streams. */
const wander = (count: number, seed: number, step: number, turns: number) => {
  let d = "";
  for (let i = 0; i < count; i++) {
    let x = hash(i, seed) * W;
    let y = hash(i + 500, seed) * H;
    let a = hash(i + 900, seed) * 6.28;
    const pts: Pt[] = [[Math.round(x), Math.round(y)]];
    for (let k = 0; k < turns; k++) {
      a += (hash(i * 31 + k, seed + 7) - 0.5) * 1.7;
      x += Math.cos(a) * step;
      y += Math.sin(a) * step;
      pts.push([Math.round(x), Math.round(y)]);
    }
    d += curve(pts);
  }
  return d;
};

const motorways: Pt[][] = [
  NW([715, 273, 740, 310, 750, 370, 760, 450, 745, 530, 750, 620, 765, 700, 765, 750, 765, 860, 780, 940, 785, 1050, 800, 1170, 835, 1260, 835, 1320]),
  NW([675, 280, 655, 360, 680, 440, 680, 530, 700, 620, 715, 720, 705, 780, 740, 870, 760, 950, 775, 1060, 775, 1140, 800, 1220, 818, 1320]),
  NW([650, 340, 730, 310, 790, 325, 840, 400, 880, 445, 870, 480, 830, 520, 740, 528, 710, 535]),
  NW([880, 445, 905, 530, 930, 580, 905, 680, 925, 760, 955, 830, 972, 890, 955, 950]),
  NW([715, 755, 765, 762]),
  NW([895, 273, 935, 305, 943, 380, 890, 440]),
  SW([818, 20, 818, 95, 790, 110, 740, 160, 715, 230, 720, 290, 725, 380, 715, 400]),
  SW([835, 20, 835, 120, 845, 190, 800, 310, 775, 440, 780, 520, 820, 600, 845, 780, 880, 860, 878, 1115]),
  SW([490, 265, 530, 285, 600, 260, 655, 208, 715, 235]),
  SW([790, 110, 835, 120, 900, 140, 970, 145, 1000, 175, 1040, 180, 1065, 217, 1110, 170, 1180, 150, 1235, 115]),
  SW([630, 575, 600, 620, 580, 690, 560, 900, 555, 1000, 530, 1080, 530, 1115]),
  NE([470, 153, 430, 220, 385, 250, 360, 300, 335, 310, 300, 390, 300, 500, 280, 570, 245, 650, 262, 700, 240, 760, 225, 850, 213, 900, 225, 1050, 240, 1130, 235, 1180]),
  SE([240, 0, 190, 70, 165, 110, 165, 200, 180, 290, 250, 290, 300, 265, 330, 210, 340, 240, 400, 265, 450, 290, 510, 312, 620, 318, 740, 315, 775, 290, 800, 330, 850, 330, 900, 290, 960, 260, 1080, 280, 1150, 240, 1230, 225, 1270, 290, 1290, 400, 1330, 460, 1418, 405]),
  SE([0, 225, 80, 265, 150, 265, 180, 290]),
  SE([1350, 440, 1350, 520, 1320, 600, 1290, 720, 1240, 830, 1190, 1040, 1150, 1065]),
  SE([275, 660, 250, 690, 180, 740, 100, 800, 0, 870]),
];

const trunks: Pt[][] = [
  NE([1418, 310, 1395, 400, 1388, 530, 1385, 620, 1340, 720, 1300, 850, 1270, 910, 1220, 990, 1190, 1060, 1160, 1140, 1200, 1230]),
  SE([1200, 60, 1190, 160, 1195, 240, 1240, 240]),
  SE([0, 210, 60, 190, 150, 155, 225, 100, 280, 120, 335, 165, 330, 210]),
  SE([165, 270, 150, 330, 90, 390, 60, 450, 0, 540]),
  SW([920, 320, 905, 470, 940, 540, 935, 560]),
  NW([870, 760, 890, 850, 895, 930, 915, 1020, 895, 1110]),
];

const primaries: Pt[][] = [
  NE([0, 320, 30, 360, 50, 430, 60, 440]),
  NE([120, 155, 75, 180, 0, 200]),
  NE([470, 290, 500, 370, 520, 335, 560, 380, 600, 430, 640, 410, 720, 480, 775, 550, 745, 640, 660, 700, 640, 760, 590, 810, 535, 830, 515, 1000, 530, 1130, 540, 1180, 600, 1220, 580, 1300]),
  NE([775, 550, 830, 640, 880, 660, 890, 750, 890, 800, 930, 870, 1000, 960, 1100, 930, 1130, 1000, 1165, 1090]),
  NE([530, 1105, 700, 1090, 800, 970, 860, 850, 890, 800]),
  NE([1060, 250, 1050, 400, 1045, 600, 970, 690, 890, 750]),
  NE([1060, 250, 1140, 240, 1200, 270, 1300, 300, 1418, 290]),
  NE([1090, 470, 1170, 430, 1200, 550, 1280, 540, 1330, 620, 1340, 720]),
  NE([270, 690, 340, 655, 430, 710, 440, 750]),
  NE([1330, 300, 1325, 420, 1270, 460, 1290, 530, 1390, 540]),
  NE([370, 290, 420, 210, 440, 155]),
  NW([1090, 290, 1140, 310, 1180, 275]),
  NW([1030, 400, 1080, 420, 1150, 380, 1210, 320, 1230, 275]),
  NW([1215, 470, 1215, 560, 1190, 620, 1230, 690, 1210, 760, 1140, 780, 1060, 790, 1010, 830, 980, 870]),
  NW([1515, 290, 1530, 340, 1560, 380]),
  NW([760, 750, 830, 740, 870, 760, 970, 740]),
  NW([640, 520, 660, 640, 690, 750, 690, 880, 630, 930, 610, 1080, 570, 1200, 565, 1320]),
  NW([710, 1130, 780, 1145, 860, 1100, 900, 1020]),
  SW([900, 140, 890, 260, 860, 310, 820, 310, 790, 200, 780, 100]),
  SW([570, 300, 595, 340, 590, 460, 600, 560]),
  SW([920, 320, 955, 480, 950, 620, 935, 730, 1000, 790, 1040, 900, 1100, 970, 1190, 910, 1290, 895]),
  SW([580, 870, 650, 940, 720, 990, 760, 1115]),
  SW([720, 1005, 800, 1000, 870, 990, 930, 930, 1030, 935]),
  SW([735, 500, 755, 700, 730, 880, 720, 980, 690, 1080]),
  SW([1385, 570, 1330, 650, 1320, 720, 1290, 850]),
  SW([830, 505, 900, 470, 960, 450, 1010, 370, 1060, 270, 1180, 200]),
  SE([860, 330, 830, 400, 790, 460]),
  SE([300, 400, 330, 480, 350, 560]),
  SE([550, 920, 570, 990, 550, 1040, 600, 1100]),
  SE([680, 950, 650, 1020, 720, 1050, 760, 1115]),
  SE([890, 890, 960, 860, 1010, 890, 1060, 880, 1090, 950, 1130, 990, 1200, 970, 1230, 900]),
  SE([1240, 380, 1280, 440, 1300, 500, 1250, 560, 1250, 640]),
  SE([1418, 225, 1380, 280, 1380, 350, 1290, 370]),
  SE([1040, 1065, 1130, 990, 1160, 890, 1220, 790]),
  SE([690, 540, 760, 545, 840, 510, 930, 450]),
];

const rivers: Pt[][] = [
  NW([760, 275, 800, 330, 850, 350, 930, 360, 980, 350, 1020, 410, 1090, 440, 1150, 380, 1210, 330, 1340, 310, 1440, 320, 1568, 290]),
  NW([660, 1040, 700, 1000, 740, 1080, 740, 1200]),
  NE([600, 155, 640, 260, 610, 380, 590, 430, 640, 520]),
  NE([690, 155, 740, 300, 765, 490]),
  NE([850, 155, 890, 260, 890, 350, 850, 430, 845, 480]),
  NE([1060, 155, 1090, 250, 1150, 320, 1165, 440, 1120, 560, 1090, 700, 1130, 860]),
  NE([1270, 200, 1220, 320, 1215, 470, 1190, 620, 1150, 740, 1120, 920]),
  NE([0, 520, 60, 500, 20, 600, 60, 690, 160, 680, 260, 600]),
  NE([240, 730, 310, 760, 340, 830, 420, 880, 530, 880, 620, 850, 700, 650]),
  NE([135, 1090, 240, 1110, 400, 1050, 560, 1070, 680, 1050, 710, 900, 740, 820, 820, 800]),
  NE([1418, 800, 1390, 950, 1330, 1010, 1320, 1130]),
  SE([280, 400, 360, 310, 440, 200, 560, 120, 700, 60]),
  SE([740, 400, 830, 360, 900, 300, 1000, 250, 1080, 210, 1180, 60]),
  SE([900, 740, 1000, 680, 1080, 620, 1150, 560, 1180, 480]),
  SE([1080, 1090, 1130, 980, 1100, 900]),
  SE([870, 800, 830, 930, 790, 1115]),
  SW([860, 320, 880, 390, 900, 430, 880, 500, 920, 560, 920, 700]),
  SW([1180, 350, 1110, 440, 1130, 520, 1250, 560]),
  SW([940, 340, 1060, 280, 1150, 160, 1210, 120]),
];

const rails: Pt[][] = [
  NW([660, 320, 640, 420, 660, 560, 680, 760, 690, 940, 720, 1060, 750, 1180, 770, 1290]),
  SW([770, 20, 740, 90, 690, 190, 650, 270, 720, 420, 800, 510, 860, 570, 900, 660, 940, 780, 935, 960, 970, 1040, 1040, 990, 1040, 920, 1160, 860, 1240, 870]),
  SE([740, 460, 800, 370, 900, 300, 1000, 240, 1080, 270, 1190, 100, 1260, 0]),
  SE([1280, 400, 1320, 500, 1418, 620]),
];

type Place = [Sheet, number, number, string, 0 | 1];
const places: Place[] = [
  [NW, 650, 279, "Madalena", 0], [NW, 790, 280, "Avintes", 0], [NW, 715, 348, "Canelas", 0], [NW, 781, 392, "Pedroso", 0],
  [NW, 699, 434, "Serzedo", 0], [NW, 915, 392, "Lever", 0], [NW, 1020, 381, "Melres", 0], [NW, 849, 467, "Sandim", 0],
  [NW, 749, 487, "Grijó", 0], [NW, 942, 519, "Canedo", 0], [NW, 780, 567, "Mozelos", 0], [NW, 655, 548, "Espinho", 1],
  [NW, 792, 613, "Lourosa", 1], [NW, 680, 676, "Esmoriz", 1], [NW, 669, 726, "Cortegaça", 0], [NW, 1254, 331, "Alpendurada", 0],
  [NW, 1280, 377, "Souselo", 0], [NW, 1497, 371, "Cinfães", 0], [NW, 1220, 438, "Castelo de", 0], [NW, 1220, 472, "Paiva", 0],
  [NW, 1108, 466, "Raiva", 0], [NW, 1364, 564, "Nespereira", 0], [NW, 1260, 759, "Arouca", 0], [NW, 884, 814, "São João da", 1],
  [NW, 884, 862, "Madeira", 1], [NW, 872, 922, "Cucujães", 0], [NW, 903, 984, "Oliveira de", 1], [NW, 903, 1032, "Azeméis", 1],
  [NW, 677, 952, "Ovar", 1], [NW, 748, 1016, "Válega", 0], [NW, 757, 1093, "Avanca", 0], [NW, 896, 1135, "Pinheiro da", 0],
  [NW, 896, 1170, "Bemposta", 0], [NW, 552, 1217, "Torreira", 0], [NW, 890, 1234, "Branca", 0], [NW, 761, 1246, "Estarreja", 1],
  [NW, 1540, 283, "Ancede", 0],
  [NE, 270, 185, "de Mouros", 0], [NE, 412, 182, "Lamego", 1], [NE, 442, 275, "Britiande", 0], [NE, 547, 298, "Salzedas", 0],
  [NE, 405, 339, "Lalim", 0], [NE, 468, 405, "Tarouca", 1], [NE, 569, 501, "Alvite", 0], [NE, 659, 490, "Leomil", 0],
  [NE, 1004, 224, "Trevões", 0], [NE, 838, 336, "Sendim", 0], [NE, 1202, 372, "Cedovim", 0], [NE, 1069, 474, "Penedono", 0],
  [NE, 870, 542, "Fonte Arcada", 0], [NE, 1276, 542, "Mêda", 1], [NE, 1327, 691, "Marialva", 0], [NE, 911, 718, "Sernancelhe", 0],
  [NE, 223, 715, "Castro Daire", 0], [NE, 426, 762, "Vila Cova à", 0], [NE, 426, 797, "Coelheira", 0], [NE, 297, 816, "Mões", 0],
  [NE, 834, 926, "Aguiar da", 0], [NE, 834, 961, "Beira", 0], [NE, 1140, 1051, "Trancoso", 1], [NE, 535, 1146, "Sátão", 0],
  [NE, 1273, 1168, "Vila Franca", 0], [NE, 1273, 1203, "das Naves", 0],
  [SW, 719, 135, "Cacia", 0], [SW, 901, 96, "Albergaria-", 1], [SW, 901, 143, "a-Velha", 1], [SW, 633, 254, "Aveiro", 1],
  [SW, 768, 281, "Eixo", 0], [SW, 720, 345, "Oliveirinha", 0], [SW, 613, 366, "Ílhavo", 1], [SW, 955, 270, "Valongo do", 0],
  [SW, 955, 305, "Vouga", 0], [SW, 955, 426, "Águeda", 1], [SW, 1274, 353, "São João do", 0], [SW, 1274, 388, "Monte", 0],
  [SW, 1430, 465, "Campo de", 0], [SW, 1430, 500, "Besteiros", 0], [SW, 625, 512, "Soza", 0], [SW, 806, 508, "Oiã", 0],
  [SW, 722, 562, "Palhaça", 0], [SW, 880, 574, "Oliveira do", 1], [SW, 880, 621, "Bairro", 1], [SW, 721, 640, "Bustos", 0],
  [SW, 750, 680, "Mamarrosa", 0], [SW, 967, 790, "Anadia", 1], [SW, 670, 900, "Febres", 0], [SW, 943, 961, "Mealhada", 1],
  [SW, 1058, 945, "Luso", 0], [SW, 725, 1050, "Cantanhede", 1], [SW, 992, 1059, "Pampilhosa", 0], [SW, 992, 1094, "do Botão", 0],
  [SW, 1275, 910, "Mortágua", 0], [SW, 1436, 892, "Santa Comba", 1], [SW, 1436, 940, "Dão", 1],
  [SE, 587, 143, "Penalva do", 0], [SE, 587, 178, "Castelo", 0], [SE, 250, 208, "Viseu", 1], [SE, 91, 243, "Torredeita", 0],
  [SE, 1072, 247, "Celorico da", 0], [SE, 1072, 283, "Beira", 0], [SE, 843, 284, "Fornos de", 0], [SE, 843, 319, "Algodres", 0],
  [SE, 484, 355, "Mangualde", 1], [SE, 185, 443, "Silgueiros", 0], [SE, 60, 472, "Canas de", 0], [SE, 60, 507, "Santa Maria", 0],
  [SE, 343, 551, "Nelas", 0], [SE, 270, 606, "Canas de", 0], [SE, 270, 641, "Senhorim", 0], [SE, 590, 606, "Vila Nova", 0],
  [SE, 590, 641, "de Tazem", 0], [SE, 1271, 534, "Guarda", 1], [SE, 762, 652, "Gouveia", 1], [SE, 630, 765, "Santa Marinha", 0],
  [SE, 586, 851, "Seia", 1], [SE, 566, 901, "São Romão", 0], [SE, 838, 901, "Manteigas", 0], [SE, 1142, 849, "Gonçalo", 0],
  [SE, 1136, 1014, "Belmonte", 0], [SE, 602, 1105, "Loriga", 0], [SE, 118, 795, "Carregal do", 0], [SE, 110, 830, "Sal", 0],
  [SE, 72, 1009, "Tábua", 0], [SE, 335, 990, "Oliveira do", 1], [SE, 335, 1035, "Hospital", 1],
];

const flames: Pt[] = [
  ...NW([888, 420, 933, 437, 1023, 447, 895, 490, 1104, 392, 1207, 467, 1244, 506, 1378, 341, 1414, 318, 1423, 440, 1408, 494, 1480, 480, 1495, 590, 1106, 590, 1070, 650, 899, 655, 1471, 642, 1477, 685, 1467, 730, 1555, 590, 1562, 738, 726, 1308]),
  ...NE([318, 185, 297, 310, 310, 337, 100, 350, 132, 352, 175, 355, 237, 378, 340, 393, 197, 433, 37, 465, 68, 470, 97, 470, 158, 525, 95, 565, 132, 602, 46, 616, 277, 520, 343, 535, 548, 538, 492, 570, 492, 626, 828, 290, 903, 510, 956, 547, 1023, 540, 1217, 412, 1230, 508, 212, 776, 290, 772, 283, 840, 402, 830, 458, 840, 740, 820, 1072, 885, 1327, 1018, 1003, 1155, 1110, 1225]),
  ...SW([792, 345, 1343, 466, 1405, 440, 1105, 572, 898, 705, 678, 735, 524, 875, 877, 882, 823, 932, 1147, 815, 1196, 1024, 1470, 205, 1455, 995, 1540, 490]),
  ...SE([1128, 180, 320, 252, 74, 340, 54, 398, 205, 365, 748, 320, 652, 358, 1220, 335, 1350, 270, 1333, 278, 560, 412, 683, 440, 543, 476, 450, 500, 612, 506, 858, 470, 220, 570, 710, 585, 882, 620, 298, 700, 707, 768, 875, 770, 1213, 722, 1318, 700, 360, 938, 186, 1006, 1398, 1044, 1412, 775]),
];

const shields: [number, number, string, string][] = [
  [718, 261, "A 24", "IP 3"],
  [459, 383, "A 25", "IP 5"],
  [1179, 434, "A 25", "IP 5"],
];

const wooded = buildWoods();
const clearings = buildClearings();
const marshPath = buildMarsh();
const burnPaths = buildBurns();
const lanes = wander(560, 3, 8, 12);
const streams = wander(60, 17, 8, 12);
const byways = wander(34, 29, 9, 12);

const PlaceText = styled.text<{ $big: 0 | 1 }>`
  font: 500 ${(p) => (p.$big ? 13 : 10)}px "Noto Sans", sans-serif;
  fill: #333;
  text-anchor: middle;
  paint-order: stroke;
  stroke: rgba(255, 255, 255, 0.75);
  stroke-width: 2px;
  stroke-linejoin: round;
`;

const ShieldText = styled.text`
  font: 10px "Noto Sans", sans-serif;
  fill: #7d2441;
  text-anchor: middle;
`;

const RegionMap = () => (
  <svg viewBox={`0 0 ${W} ${H}`} role="img" aria-label="Burn severity map">
    <defs>
      <clipPath id="land">
        <path d={trace([...coast, [W, H], [W, 0]], true)} />
      </clipPath>
      <symbol id="flame" viewBox="0 0 14 20">
        <path
          d="M6 0c1 3 3 4.500 5 7 1-.5 1-1.500 1-2.500C13.500 7 14 10 14 12.500 14 17 11 20 7 20s-7-3-7-7c0-3 1.500-5 3-7 .2 1.200.4 2 1 2.500C5.500 6 6 3 6 0z"
          fill="#ff9030"
        />
        <path d="M7 11c1.500 1.500 2.800 3 2.800 4.600C9.800 17.300 8.600 18 7 18s-2.800-.7-2.800-2.400C4.200 14 5.500 12.800 7 11z" fill="#fff" fillOpacity=".75" />
      </symbol>
    </defs>
    <rect width={W} height={H} fill="#f2efe9" />
    <g clipPath="url(#land)">
      <g shapeRendering="crispEdges">
        <path d={wooded.pale} fill="#dde5c2" opacity=".7" />
        <path d={wooded.dark} fill="#c2deb4" />
      </g>
      <path d={trace(estrela, true)} fill="#c6e2bd" stroke="#8cc28c" strokeWidth="2" />
      <path d={clearings} fill="#dfeccf" opacity=".7" />
      <path d={trace(meadow, true)} fill="#dde5bd" opacity=".7" />
      <path d={streams} fill="none" stroke="#a5d3e2" strokeWidth="1" />
      <path d={lanes} fill="none" stroke="#bdb9bc" strokeWidth="1" opacity=".8" />
      <path d={byways} fill="none" stroke="#fbc27c" strokeWidth="1" />
      {rivers.map((r, i) => (
        <path key={i} d={curve(r)} fill="none" stroke="#9fd0e0" strokeWidth="2" />
      ))}
      <path d={marshPath} fill="#aad3df" />
      {lagoons.map((r, i) => (
        <path key={i} d={trace(r, true)} fill="#aad3df" />
      ))}
      {rails.map((r, i) => (
        <path key={i} d={curve(r)} fill="none" stroke="#8f8f8f" strokeWidth="1" />
      ))}
      {primaries.map((r, i) => (
        <path key={i} d={curve(r)} fill="none" stroke="#fbb869" strokeWidth="2" />
      ))}
      {trunks.map((r, i) => (
        <path key={i} d={curve(r)} fill="none" stroke="#fa8a70" strokeWidth="2" />
      ))}
      {motorways.map((r, i) => (
        <path key={i} d={curve(r)} fill="none" stroke="#ea6d8c" strokeWidth="2" />
      ))}
    </g>
    <path d={trace(sea, true)} fill="#aad3df" />
    {places.map(([s, x, y, name, big], i) => {
      const [[px, py]] = s([x, y]);
      return (
        <PlaceText key={i} x={px} y={py} $big={big}>
          {name}
        </PlaceText>
      );
    })}
    {shields.map(([x, y, a, b], i) => (
      <g key={i}>
        <rect x={x} y={y} width="31" height="27" rx="2" fill="#eec9d2" stroke="#dc9bab" />
        <ShieldText x={x + 16} y={y + 12}>{a}</ShieldText>
        <ShieldText x={x + 16} y={y + 23}>{b}</ShieldText>
      </g>
    ))}
    <g opacity=".86" shapeRendering="crispEdges">
      {burnPaths.map((d, i) => (
        <path key={i} d={d} fill={severity[i]} />
      ))}
    </g>
    {flames.map(([x, y], i) => (
      <use key={i} href="#flame" x={x - 7} y={y - 10} width="14" height="19" />
    ))}
    <path d="M764 336v3l5 3v2l-5-1v3l2 2h-6l2-2v-3l-5 1v-2l5-3v-3z" fill="#8461c4" />
    <rect x="539" y="376" width="17" height="17" rx="2" fill="#e98a2d" stroke="#111" strokeWidth="2" />
    <path d="M547 379c3 4 4 5 4 8a4 4 0 0 1-8 0c0-3 3-4 4-8z" fill="none" stroke="#ffa94d" strokeWidth="2" />
  </svg>
);

/* ---------- small drawings ---------- */

const Cross = ({ size = 10, weight = 1 }: { size?: number; weight?: number }) => (
  <svg width={size} height={size} viewBox="0 0 10 10" aria-hidden="true">
    <path d="M1 1l8 8M9 1l-8 8" stroke="currentColor" strokeWidth={weight} strokeLinecap="round" />
  </svg>
);

const Logo = () => (
  <svg width="48" height="52" viewBox="0 0 48 52" fill="none" strokeLinecap="round" aria-hidden="true">
    <defs>
      <linearGradient id="ring" x1="0" y1="0" x2="0" y2="1">
        <stop offset="0" stopColor="#ffc50f" />
        <stop offset=".35" stopColor="#f47b20" />
        <stop offset=".7" stopColor="#d8261c" />
        <stop offset="1" stopColor="#a3151c" />
      </linearGradient>
      <linearGradient id="leaf" x1="0" y1="0" x2="0" y2="1">
        <stop offset="0" stopColor="#1d6b34" />
        <stop offset="1" stopColor="#2fae3f" />
      </linearGradient>
      <linearGradient id="trunk" x1="0" y1="0" x2="0" y2="1">
        <stop offset="0" stopColor="#14211d" />
        <stop offset=".6" stopColor="#1b2422" />
        <stop offset="1" stopColor="#8c141a" />
      </linearGradient>
    </defs>
    <path d="M28 6C15 3 2 12 2 27c0 11 7 20 14 22 4 1 6-2 6-6" stroke="url(#ring)" strokeWidth="4" />
    <path d="M43 22c2 8 0 16-5 22" stroke="url(#leaf)" strokeWidth="4" />
    <path d="M22 17v27.500l.1.500" stroke="url(#trunk)" strokeWidth="4" />
    <path d="M14 24l8 8M31 31l-9 8" stroke="#16221e" strokeWidth="4" />
    <g stroke="#111" strokeLinecap="butt">
      <path d="M35 2l3 3M44 10l4 4" strokeWidth="4" />
      <path d="M37 4l9 8" strokeWidth="2" />
      <path d="M39 8l5-4" strokeWidth="5" />
    </g>
  </svg>
);

const Expand = () => (
  <svg width="14" height="14" viewBox="0 0 14 14" fill="currentColor" aria-hidden="true">
    <path d="M1 1h4L3.800 2.200 5.600 4 4 5.600 2.200 3.800 1 5zM13 1v4l-1.200-1.200L10 5.600 8.400 4l1.800-1.800L9 1zM1 13V9l1.200 1.200L4 8.400 5.600 10l-1.800 1.800L5 13zM13 13H9l1.200-1.200L8.400 10 10 8.400l1.800 1.800L13 9z" />
  </svg>
);

const Picture = () => (
  <svg width="14" height="14" viewBox="0 0 14 14" aria-hidden="true">
    <rect x="1" y="1" width="12" height="12" rx="1" fill="currentColor" />
    <path d="M3 11l2.500-3L7 9.500 9 7l2.500 4z" fill="#dfe6f1" />
    <path d="M2 5l3-3M3 7l4-4" stroke="#dfe6f1" />
  </svg>
);

const Collapse = () => (
  <svg width="10" height="13" viewBox="0 0 10 14" fill="none" stroke="currentColor" strokeWidth="1.500" aria-hidden="true">
    <path d="M1 1l4 4 4-4M1 13l4-4 4 4" />
  </svg>
);

/* ---------- data ---------- */

const products = [
  ["SPT-D-DELTA-NBR-L8-E-v02", "Landsat-8/OLI", "80"],
  ["SPT-D-DELTA-NBR-LH-E-v02", "Landsat-5,7,8 Harmonized data", "144"],
  ["SPT-D-DELTA-NBR-MO-E-v02", "MODIS Terra", "144"],
  ["SPT-D-DELTA-NBR-S2-E-v02", "Sentinel-2a/b", "48"],
  ["SPT-D-RBR-NBR-L8-E-v02", "Landsat-8/OLI", "81"],
  ["SPT-D-RBR-NBR-LH-E-v02", "Landsat-5,7,8 Harmonized data", "144"],
];

const files = [
  ["SPT_DELTA_NBR_LTH_E2017_R003P003_32629_20231204_v02", "04/12/2023"],
  ["SPT_DELTA_NBR_LTH_E2017_R003P006_32629_20231205_v02", "05/12/2023"],
  ["SPT_DELTA_NBR_LTH_E2017_R003P009_32629_20231206_v02", "06/12/2023"],
  ["SPT_DELTA_NBR_LTH_E2017_R003P012_32629_20231207_v02", "07/12/2023"],
  ["SPT_DELTA_NBR_LTH_E2018_R003P003_32629_20231204_v02", "04/12/2023"],
  ["SPT_DELTA_NBR_LTH_E2018_R003P006_32629_20231205_v02", "05/12/2023"],
  ["SPT_DELTA_NBR_LTH_E2018_R003P009_32629_20231206_v02", "06/12/2023"],
];

const version =
  "v02: Version number of the product. Composed of a single digit which denotes changes only to the major version";

const productFacts = [
  ["ProjectAcronym:", "SPT: SeverusPT project acronym"],
  ["ApproachCode:", "D: Delta-based methods"],
  ["SeverityIndicator:", "DELTA: Post-fire - Pre-fire difference/delta method"],
  ["BaseIndex:", "NBR: Normalized Burn Ratio"],
  ["PlatformCode:", "L8: Landsat-8/OLI"],
  ["BurntAreaDataset:", "E: EFFIS dataset"],
  ["VersionNumber:", version],
];

const fileFacts = [
  ["ProjectAcronym:", "SPT: SeverusPT project acronym"],
  ["SeverityIndicator:", "DELTA: Post-fire - Pre-fire difference/delta method"],
  ["BaseIndex:", "NBR: Normalized Burn Ratio"],
  ["SatCode:", "LTH: Landsat Harmonized (LT 5, 7 and 8)"],
  ["ReferenceYear:", "E2017: Year of fire ignition"],
  ["RefPeriods:", "R003P006: The reference periods used to calculate the pre- and post-fire periods"],
  ["ReferenceSystem:", "32629: WGS 1984 / UTM 29N"],
  ["CalculationDate:", "20231205: Calculation date of the product in YYYY year MM month DD day format (YYYYMMDD)"],
  ["VersionNumber:", version],
];

const legend = [
  ["#93c5fd", "No_severity / In_recovery"],
  ["#e6cb3b", "Low"],
  ["#e08428", "Moderate"],
  ["#e9686a", "High"],
  ["#c42020", "Very high"],
];

const YearControl = ({ id, label, start }: { id: string; label: string; start: number }) => {
  const [year, setYear] = useState(start);
  const part = (year - 2000) / 24;
  return (
    <YearField>
      <label htmlFor={id}>{label}</label>
      <div>
        <Slider
          id={id}
          type="range"
          min={2000}
          max={2024}
          value={year}
          $fill={Math.round(7 + part * 86)}
          onChange={(e) => setYear(Number(e.target.value))}
        />
        <YearBox aria-label={label} value={year} onChange={(e) => setYear(Number(e.target.value) || 2000)} />
      </div>
    </YearField>
  );
};

const Information = ({ facts, top, after, lineHeight, gap }: { facts: string[][]; top: number; after: number; lineHeight: number; gap: number }) => (
  <InfoPanel $top={top}>
    <InfoHead $after={after}>
      <h3>Information</h3>
      <RoundClose aria-label="Close information">
        <Cross size={12} />
      </RoundClose>
    </InfoHead>
    <Facts $line={lineHeight} $gap={gap}>
      {facts.map(([k, v]) => (
        <React.Fragment key={k}>
          <dt>{k}</dt>
          <dd>{v}</dd>
        </React.Fragment>
      ))}
    </Facts>
  </InfoPanel>
);

export default function App() {
  return (
    <Page>
      <Global />
      <Pair $after={40}>
        <Column>
          <Caption $after={15}>(a) List of data products</Caption>
          <AppShell>
            <Header>
              <Brand href="#home">
                <Logo />
                <div>
                  severus<span>pt</span>
                </div>
              </Brand>
              <PageTitle>Data Products</PageTitle>
              <Language>
                <select aria-label="Language" defaultValue="EN">
                  <option>EN</option>
                </select>
                <FaCaretDown size={12} />
              </Language>
            </Header>
            <ShellBody>
              <Sidebar>
                <NavList>
                  <li><NavLink href="#products"><FaFolder />Data Products</NavLink></li>
                </NavList>
                <NavList>
                  <li><NavLink href="#login"><FaRightToBracket />Login</NavLink></li>
                  <li><NavLink href="#signin"><FaUserPlus />Sign In</NavLink></li>
                  <li><NavLink href="#help"><FaQuestionCircle />Help</NavLink></li>
                  <li><NavLink href="#cite"><FaQuoteRight />How to Cite</NavLink></li>
                </NavList>
              </Sidebar>
              <ProductArea>
                <ScrollThumb />
                <Toolbar>
                  <ProductHeading>Products</ProductHeading>
                  <FilterRow $gap={6}>
                    {["Platform Code", "Burnt Area Dataset", "Base Index", "Severity Indicator"].map((f) => (
                      <FilterButton key={f}><FaFilter />{f}</FilterButton>
                    ))}
                  </FilterRow>
                </Toolbar>
                <Table>
                  <colgroup><Col /><Col $w={73} /><Col $w={83} /></colgroup>
                  <thead>
                    <tr><th>Name</th><th>Files</th><th>Actions</th></tr>
                  </thead>
                  <tbody>
                    {products.map(([code, sensor, count]) => (
                      <Row key={code} $hover={code === "SPT-D-RBR-NBR-L8-E-v02"}>
                        <td>
                          <NameCell $gap={10}>
                            <FaFolder size={18} />
                            <div>
                              {code}
                              <small>{`Delta / Normalized Burn Ratio / ${sensor} / EFFIS dataset files`}</small>
                            </div>
                          </NameCell>
                        </td>
                        <Count>{count}</Count>
                        <td>
                          <Actions $gap={7}>
                            <IconButton aria-label="View"><FaEye size={13} /></IconButton>
                            <IconButton aria-label="Information"><FaInfoCircle size={12} /></IconButton>
                          </Actions>
                        </td>
                      </Row>
                    ))}
                  </tbody>
                </Table>
              </ProductArea>
            </ShellBody>
          </AppShell>
        </Column>
        <Column $drop>
          <Caption $right={4} $after={23}>(b) Data product information panel</Caption>
          <Information facts={productFacts} top={28} after={9} lineHeight={23} gap={7} />
        </Column>
      </Pair>

      <Pair $after={21}>
        <Column>
          <Caption $indent={3} $after={22}>(c) List of burn severity files</Caption>
          <FloatingCaption $after={0}>(e) Filter-based search</FloatingCaption>
          <FilePanel>
            <FileArea>
              <FileToolbar>
                <FileTitles>
                  <h2>Files</h2>
                  <h3>SPT-D-DELTA-NBR-LH-E-v02</h3>
                  <Chips>
                    <Chip><Cross size={12} />2017 - 2024</Chip>
                    <Chip><Cross size={12} />32629</Chip>
                  </Chips>
                </FileTitles>
                <FileFilters $gap={17}>
                  <Anchor>
                    <FilterButton $large $open><FaFilter />Reference Year</FilterButton>
                    <YearMenu>
                      <YearControl id="start-year" label="Start Year" start={2017} />
                      <YearControl id="end-year" label="End Year" start={2024} />
                    </YearMenu>
                  </Anchor>
                  <FilterButton $large><FaFilter />Reference Periods</FilterButton>
                  <FilterButton $large><FaFilter />Reference System</FilterButton>
                </FileFilters>
              </FileToolbar>
              <Table $large>
                <colgroup><Col /><Col $w={194} /><Col $w={86} /></colgroup>
                <thead>
                  <tr><th>Name</th><th>Last Update</th><th>Actions</th></tr>
                </thead>
                <tbody>
                  {files.map(([name, date]) => (
                    <Row key={name}>
                      <td>
                        <NameCell $gap={13}><FaFile size={22} width={17} />{name}</NameCell>
                      </td>
                      <td>{date}</td>
                      <td>
                        <Actions $gap={9}>
                          <IconButton aria-label="Preview map"><FaMapMarkedAlt size={17} /></IconButton>
                          <IconButton aria-label="View"><FaEye size={17} /></IconButton>
                          <IconButton aria-label="Information"><FaInfoCircle size={16} /></IconButton>
                        </Actions>
                      </td>
                    </Row>
                  ))}
                </tbody>
              </Table>
            </FileArea>
          </FilePanel>
        </Column>
        <Column>
          <Caption $right={10} $after={22}>(d) File information panel</Caption>
          <Information facts={fileFacts} top={25} after={8} lineHeight={21} gap={8} />
        </Column>
      </Pair>

      <MapSection>
        <Caption $indent={2} $after={16}>(f) Interactive preview map</Caption>
        <MapPanel>
          <MapFrame>
            <RegionMap />
            <ZoomControl>
              <button aria-label="Zoom in">+</button>
              <button aria-label="Zoom out">−</button>
            </ZoomControl>
            <MapTools>
              <button aria-label="Full screen"><Expand /></button>
              <button aria-label="Contrast"><FaAdjust size={13} /></button>
              <button aria-label="Base layer"><Picture /></button>
            </MapTools>
            <MapClose aria-label="Close map"><Cross size={12} /></MapClose>
            <Popup>
              <PopupClose aria-label="Close popup"><Cross size={9} /></PopupClose>
              <dl>
                <dt>Province:</dt><dd>Viseu Dão Lafões</dd>
                <dt>Commune:</dt><dd>Campia</dd>
                <dt>Fire date:</dt><dd>2017-10-15 00:00:00</dd>
                <dt>Area (ha):</dt><dd>9881</dd>
                <dt>Area (ht):</dt><dd>10268.295</dd>
              </dl>
              <AreaButton>Zoom to area</AreaButton>
            </Popup>
            <Legend>
              <LegendHead>Legend<Collapse /></LegendHead>
              <ul>
                {legend.map(([c, t]) => (
                  <li key={t}><Swatch $c={c} />{t}</li>
                ))}
              </ul>
            </Legend>
            <Attribution>
              <svg width="12" height="8" viewBox="0 0 12 8" aria-hidden="true">
                <path fill="#4c7be1" d="M0 0h12v4H0z" />
                <path fill="#ffd500" d="M0 4h12v4H0z" />
              </svg>
              <a href="#leaflet">Leaflet</a> | © <a href="#osm">OpenStreetMap</a> contributors
            </Attribution>
          </MapFrame>
        </MapPanel>
      </MapSection>

      <Callouts viewBox="0 0 1902 2231" preserveAspectRatio="none" fill="none" stroke="#000" strokeWidth="3" aria-hidden="true">
        <rect x="286" y="294" width="409" height="42" />
        <path d="M286 315H210V665M201 653l9 13 9-13" />
        <rect x="1138" y="303" width="24" height="23" />
        <path d="M1163 315H1268M1256 306l13 9-13 8" />
        <path d="M466 821L468 791H1090L1092 820" />
        <rect x="1141" y="1018" width="25" height="24" />
        <path d="M1138 1028H1078V1431M1069 1419l9 13 9-13" />
        <rect x="1192" y="1018" width="25" height="24" />
        <path d="M1218 1030H1269M1256 1022l13 8-13 9" />
      </Callouts>
    </Page>
  );
}
